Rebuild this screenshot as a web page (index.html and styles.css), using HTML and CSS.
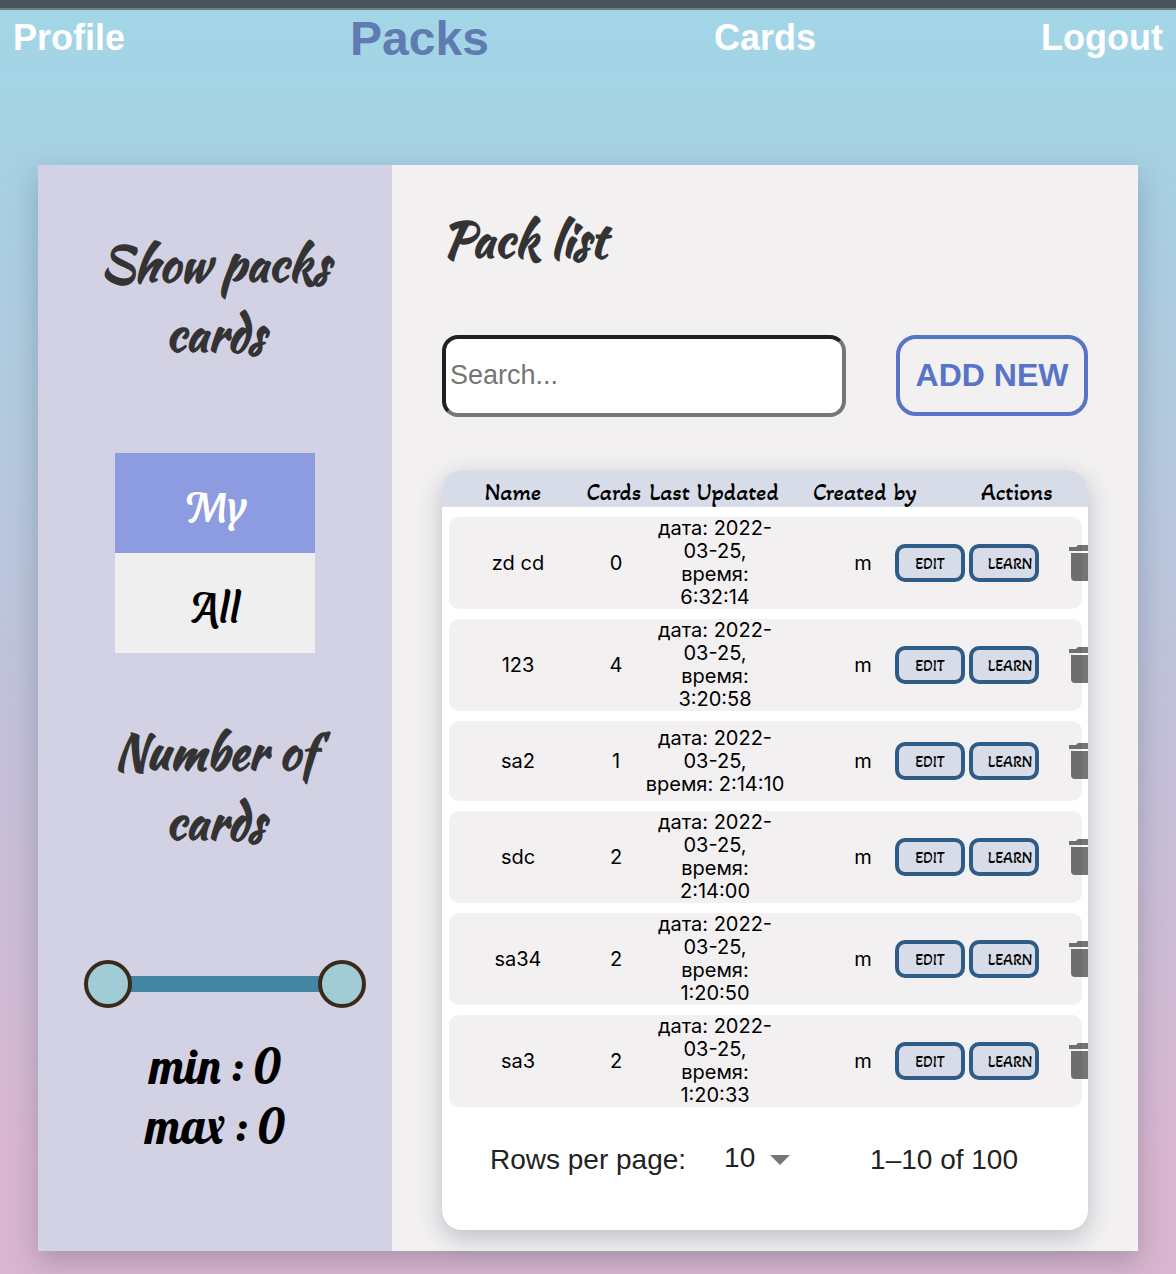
FILE: index.html
```html
<!DOCTYPE html>
<html lang="en">
<head>
<meta charset="utf-8">
<meta name="viewport" content="width=device-width, initial-scale=1">
<title>Packs</title>
<link rel="stylesheet" href="styles.css">
</head>
<body>
<header class="header">
  <nav class="nav">
    <a class="nav-link" href="#profile">Profile</a>
    <a class="nav-link nav-link-active" href="#packs">Packs</a>
    <a class="nav-link" href="#cards">Cards</a>
    <a class="nav-link" href="#logout">Logout</a>
  </nav>
</header>
<div class="panel">
  <aside class="sidebar">
    <h2 class="title">Show packs cards</h2>
    <div class="switch">
      <button class="switch-button switch-button-active" type="button">My</button>
      <button class="switch-button" type="button">All</button>
    </div>
    <h2 class="title">Number of cards</h2>
    <div class="range">
      <input class="range-input" type="range" min="0" max="100" value="0" aria-label="Minimum cards">
      <input class="range-input" type="range" min="0" max="100" value="100" aria-label="Maximum cards">
    </div>
    <div class="limits">
      <div>min : 0</div>
      <div>max : 0</div>
    </div>
  </aside>
  <main class="main">
    <h1 class="title">Pack list</h1>
    <div class="toolbar">
      <input class="search" type="text" placeholder="Search..." aria-label="Search">
      <button class="add" type="button">ADD NEW</button>
    </div>
    <section class="card">
      <table class="table">
        <thead>
          <tr class="head"><th>Name</th><th>Cards</th><th>Last Updated</th><th>Created by</th><th>Actions</th></tr>
        </thead>
        <tbody id="rows"></tbody>
      </table>
      <div class="pager">
        <label class="pager-label" for="size">Rows per page:</label>
        <span class="pager-size">
          <select class="pager-select" id="size"><option>10</option><option>25</option></select>
          <svg class="pager-arrow" viewBox="0 0 20 10" aria-hidden="true"><path d="M0 0h20L10 10z"/></svg>
        </span>
        <span class="pager-count">1–10 of 100</span>
      </div>
    </section>
  </main>
</div>
<script src="rows.js"></script>
</body>
</html>
```
FILE: rows.js
```js
const packs = [
  ["zd cd", 0, "6:32:14"],
  ["123", 4, "3:20:58"],
  ["sa2", 1, "2:14:10"],
  ["sdc", 2, "2:14:00"],
  ["sa34", 2, "1:20:50"],
  ["sa3", 2, "1:20:33"]
];

document.getElementById("rows").innerHTML = packs.map(([name, cards, time]) => `
  <tr class="row">
    <td>${name}</td>
    <td>${cards}</td>
    <td>дата: 2022-03-25,<br>время: ${time}</td>
    <td class="author">m</td>
    <td class="actions">
      <button class="action" type="button">EDIT</button>
      <button class="action action-learn" type="button">LEARN</button>
      <button class="remove" type="button" aria-label="Delete">
        <svg viewBox="0 0 28 36" aria-hidden="true"><path d="M2 8h24v24a4 4 0 0 1-4 4H6a4 4 0 0 1-4-4zM28 2v4H0V2h7l2-2h10l2 2z"/></svg>
      </button>
    </td>
  </tr>`).join("");
```
FILE: styles.css
```css
* {
  box-sizing: border-box;
}

body {
  margin: 0;
  min-height: 100vh;
  padding-bottom: 23px;
  font-family: "Liberation Sans", Arial, sans-serif;
  background: linear-gradient(#a2d6e7 0%, #a5d4e5 8%, #a9cfe2 16%, #b7c8dd 38%, #c3c0d8 58%, #cebbd4 75%, #dab5cf 92%);
}

.header {
  border-top: 8px solid #47555e;
}

.nav {
  display: flex;
  justify-content: space-between;
  align-items: center;
  height: 58px;
  padding: 0 13px;
  border-top: 2px solid #747d82;
}

.nav-link {
  color: #fff;
  font-size: 36px;
  font-weight: 700;
  text-decoration: none;
}

.nav-link-active {
  color: #607bb0;
  font-size: 48px;
}

.panel {
  display: grid;
  grid-template-columns: 354px minmax(0, 1fr);
  margin: 99px 38px 0;
  background: #f2f0f1;
  box-shadow: 0 10px 26px rgba(20, 50, 70, 0.25);
}

.sidebar {
  padding: 64px 50px 0;
  background: #d3d2e5;
  text-align: center;
}

.title {
  margin: 0;
  color: #333;
  font-family: "Kaushan Script", Lato, sans-serif;
  font-size: 48px;
  font-weight: 700;
  line-height: 70px;
}

.switch {
  display: flex;
  flex-direction: column;
  width: 200px;
  margin: 84px auto 64px;
}

.switch-button {
  height: 100px;
  border: 0;
  padding: 0;
  background: #efefef;
  color: #000;
  font-family: "Sansita Swashed", "Akaya Telivigala", sans-serif;
  font-size: 44px;
}

.switch-button-active {
  background: #8d9be0;
  color: #fff;
}

.range {
  display: grid;
  width: 282px;
  height: 48px;
  margin: 103px 0 0 -4px;
  background: linear-gradient(#4385a2, #4385a2) center / 240px 16px no-repeat;
}

.range-input {
  grid-area: 1 / 1;
  width: 100%;
  height: 48px;
  margin: 0;
  appearance: none;
  background: none;
  pointer-events: none;
}

.range-input::-webkit-slider-thumb {
  width: 48px;
  height: 48px;
  appearance: none;
  border: 4px solid #3a2a1c;
  border-radius: 50%;
  background: #a1ccd6;
  pointer-events: auto;
}

.limits {
  margin-top: 28px;
  font-family: "Lobster", Lato, sans-serif;
  font-size: 48px;
  line-height: 60px;
}

.main {
  padding: 40px 50px 21px;
}

.toolbar {
  display: flex;
  gap: 50px;
  margin: 60px 0 53px;
}

.search {
  flex: 1;
  min-width: 0;
  height: 82px;
  padding: 0 4px 2px;
  border: 4px solid;
  border-color: #1f2020 #767676 #767676 #1f2020;
  border-radius: 16px;
  background: #fff;
  font-family: inherit;
  font-size: 27px;
}

.search::placeholder {
  color: #757575;
}

.add {
  width: 192px;
  height: 81px;
  padding: 0;
  border: 4px solid #5874c6;
  border-radius: 20px;
  background: none;
  color: #5874c6;
  font-family: inherit;
  font-size: 32px;
  font-weight: 700;
}

.card {
  overflow: hidden;
  border-radius: 20px;
  background: #fff;
  box-shadow: 0 8px 24px rgba(30, 50, 80, 0.25);
}

.table,
.table thead {
  display: block;
}

.table tbody {
  display: flex;
  flex-direction: column;
  gap: 10px;
  padding: 10px 6px 0 7px;
}

.head,
.row {
  display: grid;
  align-items: center;
  text-align: center;
}

.head {
  grid-template-columns: 142px 60px 140px minmax(0, 1fr) 142px;
  height: 37px;
  padding-top: 8px;
  background: #d7dce8;
  font-family: "Akaya Telivigala", Lato, sans-serif;
  font-size: 24px;
  line-height: 28px;
}

.head th {
  padding: 0;
  font-weight: 400;
  white-space: nowrap;
}

.row {
  grid-template-columns: 138px 58px 140px 110px minmax(0, 1fr);
  min-height: 80px;
  border-radius: 10px;
  background: #f2f0f1;
  font-family: Inter, sans-serif;
  font-size: 20px;
  line-height: 23px;
}

.row td {
  padding: 0;
}

.row .author {
  padding-left: 46px;
}

.row .actions {
  display: flex;
  align-items: center;
  gap: 4px;
}

.action {
  flex: none;
  width: 70px;
  height: 38px;
  padding: 0;
  border: 4px solid #2f5b87;
  border-radius: 10px;
  background: #d7dce8;
  color: #000;
  font-family: "Akaya Telivigala", Lato, sans-serif;
  font-size: 16px;
}

.action-learn {
  padding-left: 12px;
}

.remove {
  flex: none;
  width: 28px;
  height: 36px;
  margin-left: 26px;
  padding: 0;
  border: 0;
  background: none;
}

.remove svg {
  display: block;
  width: 28px;
  height: 36px;
  fill: rgba(0, 0, 0, 0.54);
}

.pager {
  display: flex;
  align-items: center;
  height: 123px;
  padding: 0 70px 18px 48px;
  color: #222;
  font-size: 28px;
}

.pager-size {
  display: flex;
  align-items: center;
  gap: 14px;
  margin-left: 38px;
}

.pager-select {
  padding: 0 0 4px;
  border: 0;
  appearance: none;
  background: none;
  color: inherit;
  font: inherit;
}

.pager-arrow {
  width: 20px;
  height: 10px;
  fill: #757575;
}

.pager-count {
  margin-left: auto;
}
```
